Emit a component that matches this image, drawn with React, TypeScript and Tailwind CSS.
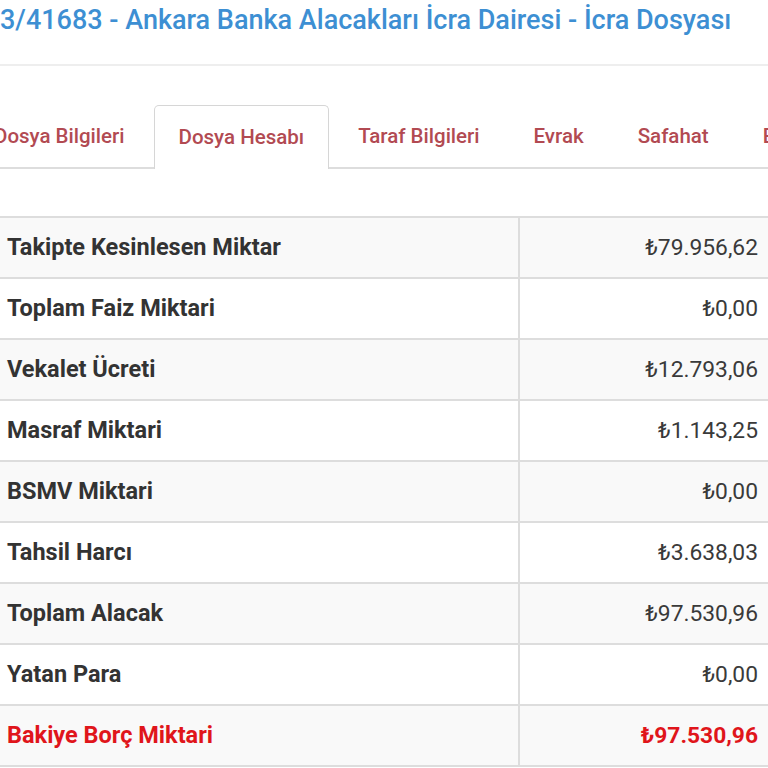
const tabs = ['Dosya Bilgileri', 'Dosya Hesabı', 'Taraf Bilgileri', 'Evrak', 'Safahat', 'Eklentiler'];

const rows: { label: string; value: string; danger?: boolean }[] = [
  { label: 'Takipte Kesinlesen Miktar', value: '₺79.956,62' },
  { label: 'Toplam Faiz Miktari', value: '₺0,00' },
  { label: 'Vekalet Ücreti', value: '₺12.793,06' },
  { label: 'Masraf Miktari', value: '₺1.143,25' },
  { label: 'BSMV Miktari', value: '₺0,00' },
  { label: 'Tahsil Harcı', value: '₺3.638,03' },
  { label: 'Toplam Alacak', value: '₺97.530,96' },
  { label: 'Yatan Para', value: '₺0,00' },
  { label: 'Bakiye Borç Miktari', value: '₺97.530,96', danger: true },
];

function App() {
  return (
    <div className="w-[768px] h-[768px] overflow-hidden bg-white font-['Roboto','Noto_Sans',sans-serif]">
      {/* header */}
      <div className="border-b-2 border-[#eeeeee] pb-[24px]">
        <h1 className="text-[27px] leading-[40px] font-medium text-[#3d8fd3] whitespace-nowrap">
          3/41683 - Ankara Banka Alacakları İcra Dairesi - İcra Dosyası
        </h1>
      </div>

      {/* tabs */}
      <div className="mt-[39px] border-b-2 border-[#dddddd] flex whitespace-nowrap ml-[-31px]">
        {tabs.map((t) => (
          <div
            key={t}
            className={
              t === 'Dosya Hesabı'
                ? 'mr-[4px] -mb-[2px] h-[64px] flex items-center px-[24px] border border-b-0 border-[#d6d6d6] rounded-t-[5px] bg-white text-[20.5px] font-medium text-[#b24a52]'
                : 'mr-[4px] h-[62px] flex items-center px-[24px] border border-transparent border-b-0 text-[20.5px] font-medium text-[#b24a52]'
            }
          >
            {t}
          </div>
        ))}
      </div>

      {/* account table */}
      <div className="mt-[47px]">
        {rows.map((r, i) => (
          <div
            key={r.label}
            className={`grid grid-cols-[518px_1fr] h-[61px] border-t-2 border-[#dddddd] ${i % 2 === 0 ? 'bg-[#f9f9f9]' : 'bg-white'}`}
          >
            <div className={`flex items-center pl-[7px] pt-[1px] text-[23.5px] font-bold ${r.danger ? 'text-[#e0151b]' : 'text-[#333333]'}`}>
              {r.label}
            </div>
            <div
              className={`flex items-center justify-end border-l-2 border-[#dddddd] pr-[10px] pt-[1px] text-[22.8px] ${r.danger ? 'font-bold text-[#e0151b]' : 'text-[#3a3a3a]'}`}
            >
              {r.value}
            </div>
          </div>
        ))}
        <div className="border-t-2 border-[#dddddd]" />
      </div>
    </div>
  );
}

export default App;
